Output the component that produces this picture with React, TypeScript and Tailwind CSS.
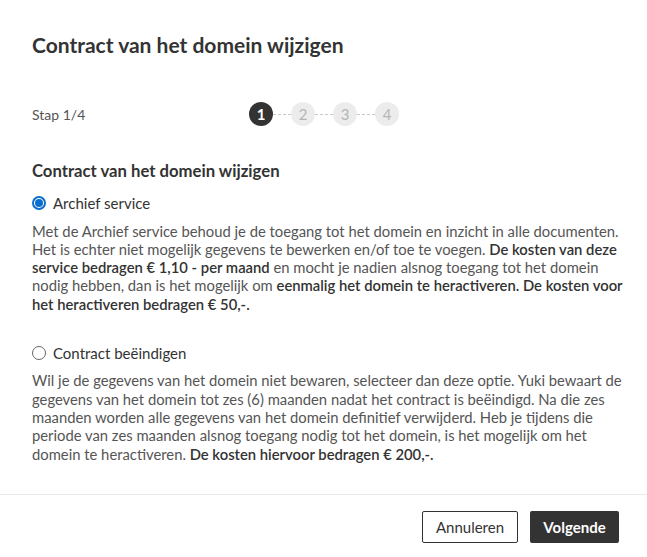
import React from 'react';

const font = { fontFamily: 'Lato, "Noto Sans", sans-serif' };

function Radio({ checked }: { checked: boolean }) {
  return checked ? (
    <span className="flex h-[14px] w-[14px] items-center justify-center rounded-full border-2 border-[#0b6ecc] bg-white">
      <span className="h-[8px] w-[8px] rounded-full bg-[#0b6ecc]" />
    </span>
  ) : (
    <span className="h-[14px] w-[14px] rounded-full border-[1.5px] border-[#666]" />
  );
}

function Steps() {
  const steps = [1, 2, 3, 4];
  return (
    <div className="flex items-center">
      {steps.map((n, i) => (
        <React.Fragment key={n}>
          {i > 0 && <span className="w-[18px] border-t border-dashed border-[#c8c8c8]" />}
          <span
            className={
              n === 1
                ? 'flex h-[24px] w-[24px] items-center justify-center rounded-full bg-[#333] text-[15px] font-bold text-white'
                : 'flex h-[24px] w-[24px] items-center justify-center rounded-full bg-[#ececec] text-[15px] text-[#b5b5b5]'
            }
          >
            {n}
          </span>
        </React.Fragment>
      ))}
    </div>
  );
}

function B({ children }: { children: React.ReactNode }) {
  return <b className="font-semibold text-[#333]">{children}</b>;
}

export default function App() {
  return (
    <div className="flex h-[557px] w-[647px] flex-col bg-white text-[#333]" style={font}>
      <div className="pl-[32px] pr-[20px] pt-[32px]">
        <h1 className="text-[21px] font-bold leading-[26px] text-[#333]">Contract van het domein wijzigen</h1>

        <div className="mt-[44px] flex items-center">
          <span className="w-[217px] text-[14px] text-[#555]">Stap 1/4</span>
          <Steps />
        </div>

        <h2 className="mt-[34px] text-[16.7px] font-bold leading-[22px] text-[#333]">Contract van het domein wijzigen</h2>

        <label className="mt-[10px] flex items-center gap-[7px]">
          <Radio checked />
          <span className="text-[15px] text-[#333]">Archief service</span>
        </label>
        <p className="mt-[7px] text-[14.8px] leading-[18.3px] text-[#555]">
          Met de Archief service behoud je de toegang tot het domein en inzicht in alle documenten. Het is echter niet
          mogelijk gegevens te bewerken en/of toe te voegen. <B>De kosten van deze service bedragen € 1,10 - per maand</B>{' '}
          en mocht je nadien alsnog toegang tot het domein nodig hebben, dan is het mogelijk om{' '}
          <B>eenmalig het domein te heractiveren. De kosten voor het heractiveren bedragen € 50,-.</B>
        </p>

        <label className="mt-[29px] flex items-center gap-[7px]">
          <Radio checked={false} />
          <span className="text-[15px] text-[#333]">Contract beëindigen</span>
        </label>
        <p className="mt-[7px] text-[14.8px] leading-[18.3px] text-[#555]">
          Wil je de gegevens van het domein niet bewaren, selecteer dan deze optie. Yuki bewaart de gegevens van het
          domein tot zes (6) maanden nadat het contract is beëindigd. Na die zes maanden worden alle gegevens van het
          domein definitief verwijderd. Heb je tijdens die periode van zes maanden alsnog toegang nodig tot het domein, is
          het mogelijk om het domein te heractiveren. <B>De kosten hiervoor bedragen € 200,-.</B>
        </p>
      </div>

      <div className="mt-auto border-t border-[#eaeaea] px-[28px] pb-[14px] pt-[16px]">
        <div className="flex justify-end gap-[12px]">
          <button className="h-[32px] w-[96px] rounded-[2px] border border-[#333] bg-white text-[15px] text-[#333]">
            Annuleren
          </button>
          <button className="h-[32px] w-[89px] rounded-[2px] bg-[#333] text-[15px] font-bold text-white">
            Volgende
          </button>
        </div>
      </div>
    </div>
  );
}
